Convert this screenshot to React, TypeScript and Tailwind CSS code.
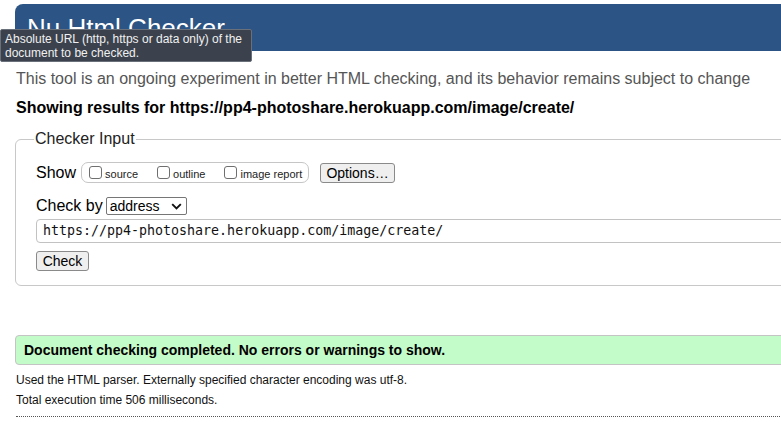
import React from "react";

const sans = "font-['Liberation_Sans',Arial,sans-serif]";

const Box = ({ label }: { label: string }) => (
  <label className="flex items-center gap-[3px]">
    <span className="inline-block h-[13px] w-[13px] rounded-[3px] border border-[#6f6f6f] bg-white" />
    <span className="pt-[3px] text-[11px] leading-[13px] text-[#222]">{label}</span>
  </label>
);

const App = () => {
  return (
    <div className={`relative h-[434px] w-[781px] overflow-hidden bg-white text-black ${sans}`}>
      <div className="w-[900px] pl-[15px] pt-[4px]">
        {/* Header */}
        <div className="h-[47px] rounded-tl-[8px] bg-[#2c5586] pl-[12px] pt-[9px]">
          <h1 className="text-[26px] leading-[30px] text-white">Nu Html Checker</h1>
        </div>

        <p className="mt-[18px] pl-[1px] text-[16px] leading-[20px] text-[#555]">
          This tool is an ongoing experiment in better HTML checking, and its behavior remains subject to change
        </p>
        <p className="mt-[9px] pl-[1px] text-[16px] font-bold leading-[20px]">
          Showing results for https://pp4-photoshare.herokuapp.com/image/create/
        </p>

        {/* Checker input */}
        <fieldset className="mt-[12px] h-[156px] rounded-[6px] border border-[#c8c8c8] pl-[20px] pt-[14px]">
          <legend className="-ml-[2px] px-[1px] text-[16px] leading-[18px] text-[#222]">Checker Input</legend>

          <div className="flex items-center">
            <span className="text-[16px] leading-[20px]">Show</span>
            <div className="ml-[5px] flex h-[21px] w-[228px] items-center gap-[19px] rounded-[7px] border border-[#c6c6c6] pl-[7px]">
              <Box label="source" />
              <Box label="outline" />
              <Box label="image report" />
            </div>
            <button className="ml-[11px] h-[20px] w-[75px] rounded-[3px] border border-[#8a8a8a] bg-[#efefef] text-[14px] leading-[18px] text-black">
              Options…
            </button>
          </div>

          <div className="mt-[13px] flex items-center">
            <span className="text-[16px] leading-[20px]">Check by</span>
            <div className="ml-[3px] flex h-[18px] w-[81px] shrink-0 items-center justify-between rounded-[2px] border border-[#767676] bg-white pl-[3px] pr-[4px]">
              <span className="text-[14px] leading-[16px]">address</span>
              <svg width="11" height="7" viewBox="0 0 11 7">
                <path d="M1.2 1.2l4.3 4.3 4.3-4.3" fill="none" stroke="#111" strokeWidth="1.9" />
              </svg>
            </div>
          </div>

          <div className="mt-[3px] flex h-[24px] items-center rounded-l-[4px] border border-[#c2c2c2] pl-[6px] font-['DejaVu_Sans_Mono',monospace] text-[13.3px] text-[#111]">
            https://pp4-photoshare.herokuapp.com/image/create/
          </div>

          <button className="mt-[8px] h-[20px] w-[53px] rounded-[3px] border border-[#8a8a8a] bg-[#efefef] text-[14px] leading-[18px]">
            Check
          </button>
        </fieldset>

        {/* Result */}
        <div className="mt-[49px] flex h-[30px] items-center rounded-l-[4px] border border-[#c4c4c4] bg-[#c4fcc9] pl-[8px] text-[14px] font-bold">
          Document checking completed. No errors or warnings to show.
        </div>
        <p className="mt-[8px] pl-[1px] text-[12px] leading-[14px] text-[#111]">
          Used the HTML parser. Externally specified character encoding was utf-8.
        </p>
        <p className="mt-[6px] pl-[1px] text-[12px] leading-[14px] text-[#111]">Total execution time 506 milliseconds.</p>
        <div className="mt-[9px] ml-[1px] border-t border-dotted border-[#555]" />
      </div>

      {/* Tooltip */}
      <div className="absolute left-0 top-[29px] h-[33px] w-[252px] rounded-[2px] border border-[#6a707a] bg-[#3b424d] px-[4px] pt-[2px] text-[12px] leading-[14px] text-[#f0f0f0]">
        Absolute URL (http, https or data only) of the
        <br />
        document to be checked.
      </div>
    </div>
  );
};

export default App;
